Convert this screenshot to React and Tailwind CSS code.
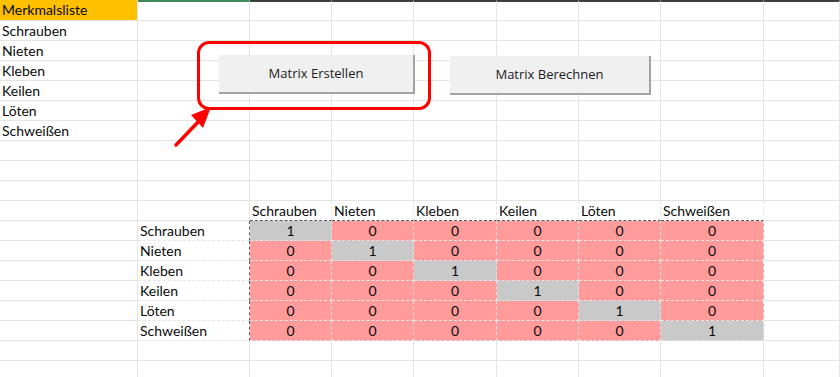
import React from "react"

const cols = ["w-[138px]", "w-[112px]", "w-[82px]", "w-[82px]", "w-[83px]", "w-[82px]", "w-[82px]", "w-[103px]", "flex-1"]
const items = ["Schrauben", "Nieten", "Kleben", "Keilen", "Löten", "Schweißen"]
const ROWS = 19

const Cell = ({ i, className = "", children }) => (
  <div className={`${cols[i]} shrink-0 h-full border-r border-b border-[#e4e4e4] flex items-center px-[2px] ${className}`}>
    {children}
  </div>
)

const App = () => {
  const rows = []
  for (let r = 0; r < ROWS; r++) {
    const cells = []
    for (let c = 0; c < 9; c++) {
      let content = null
      let cls = ""
      if (c === 0 && r === 0) {
        content = "Merkmalsliste"
        cls = "bg-[#ffc000]"
      } else if (c === 0 && r >= 1 && r <= 6) {
        content = items[r - 1]
      } else if (r === 0 && c >= 1) {
        cls = c === 1 ? "border-t-2 border-t-[#3f8a5c]" : "border-t-2 border-t-[#3d3d3d]"
      }
      if (r === 10 && c >= 2 && c <= 7) {
        content = items[c - 2]
        cls = "border-b-[#5a5a5a] border-dashed"
      }
      if (r >= 11 && r <= 16) {
        const m = r - 11
        if (c === 1) {
          content = items[m]
          cls = "border-r-[#5a5a5a] border-dashed border-b-[#e4e4e4]"
        }
        if (c >= 2 && c <= 7) {
          const diag = c - 2 === m
          content = diag ? "1" : "0"
          cls = `justify-center border-dashed border-[#5a5a5a] ${diag ? "bg-[#c9c9c9]" : "bg-[#ff9b9b]"}`
        }
      }
      cells.push(
        <Cell key={c} i={c} className={cls}>
          {content}
        </Cell>
      )
    }
    rows.push(
      <div key={r} className={`flex ${r === 0 ? "h-[21px]" : "h-[20px]"}`}>
        {cells}
      </div>
    )
  }

  return (
    <div className="relative w-[840px] h-[377px] overflow-hidden bg-white text-[14px] leading-none text-[#0a0a0a]" style={{ fontFamily: "Lato, 'Noto Sans', sans-serif" }}>
      {rows}

      {/* buttons */}
      <button className="absolute left-[219px] top-[55px] w-[196px] h-[39px] bg-[#f0f0f0] border-r-2 border-b-2 border-[#a3a3a3] text-[13px] text-[#1a1a1a]" style={{ fontFamily: "'Open Sans', sans-serif" }}>
        Matrix Erstellen
      </button>
      <button className="absolute left-[450px] top-[56px] w-[201px] h-[39px] bg-[#f0f0f0] border-r-2 border-b-2 border-[#a3a3a3] text-[13px] text-[#1a1a1a]" style={{ fontFamily: "'Open Sans', sans-serif" }}>
        Matrix Berechnen
      </button>

      {/* highlight */}
      <div className="absolute left-[197px] top-[41px] w-[234px] h-[69px] border-[3px] border-[#ff0000] rounded-[12px]" />
      <svg className="absolute left-[170px] top-[100px]" width="50" height="50" viewBox="0 0 50 50">
        <line x1="6" y1="45" x2="30" y2="20" stroke="#ff0000" strokeWidth="3.5" strokeLinecap="round" />
        <polygon points="41,7 21,15 33,28" fill="#ff0000" />
      </svg>
    </div>
  )
}

export default App
